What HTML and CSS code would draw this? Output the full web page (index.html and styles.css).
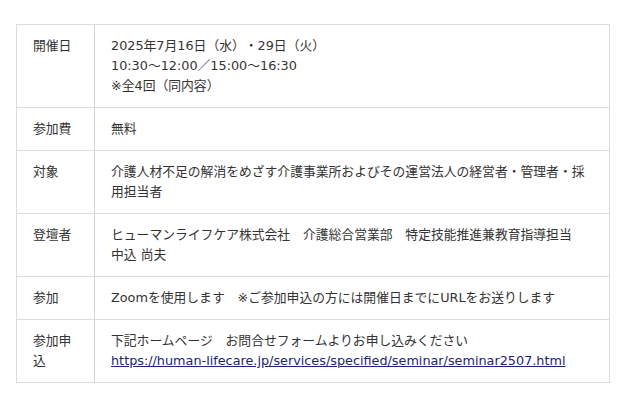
FILE: index.html
```html
<!DOCTYPE html>
<html lang="ja">
<head>
  <meta charset="UTF-8" />
  <meta name="viewport" content="width=device-width, initial-scale=1.0"/>
  <title>セミナー概要</title>
  <link rel="stylesheet" href="styles.css">
</head>
<body>

<table class="info">
  <tr>
    <th>開催日</th>
    <td>2025年7月16日（水）・29日（火）<br>10:30〜12:00／15:00〜16:30<br>※全4回（同内容）</td>
  </tr>
  <tr>
    <th>参加費</th>
    <td>無料</td>
  </tr>
  <tr>
    <th>対象</th>
    <td>介護人材不足の解消をめざす介護事業所およびその運営法人の経営者・管理者・採用担当者</td>
  </tr>
  <tr>
    <th>登壇者</th>
    <td>ヒューマンライフケア株式会社　介護総合営業部　特定技能推進兼教育指導担当<br>中込 尚夫</td>
  </tr>
  <tr>
    <th>参加</th>
    <td>Zoomを使用します　※ご参加申込の方には開催日までにURLをお送りします</td>
  </tr>
  <tr>
    <th>参加申込</th>
    <td>下記ホームページ　お問合せフォームよりお申し込みください<br><a href="#">https://human-lifecare.jp/services/specified/seminar/seminar2507.html</a></td>
  </tr>
</table>

</body>
</html>
```

FILE: styles.css
```css
body {
  font-family: "DejaVu Sans", "Noto Sans CJK JP", sans-serif;
  font-size: 12.8px;
  line-height: 20px;
  color: #333;
  background: #fff;
  margin: 0;
  padding: 24px 0 0 16px;
  text-spacing-trim: space-all;
}
.info {
  width: 594px;
  border-collapse: collapse;
  border: 1px solid #e6e6e6;
}
.info th,
.info td {
  border: 1px solid #dcdcdc;
  padding: 11px 16px;
  text-align: left;
  vertical-align: top;
  font-weight: normal;
}
.info th {
  width: 45px;
  border-right-color: #d4d4d4;
}
.info a {
  color: #1a237e;
  text-decoration: underline;
}
```
